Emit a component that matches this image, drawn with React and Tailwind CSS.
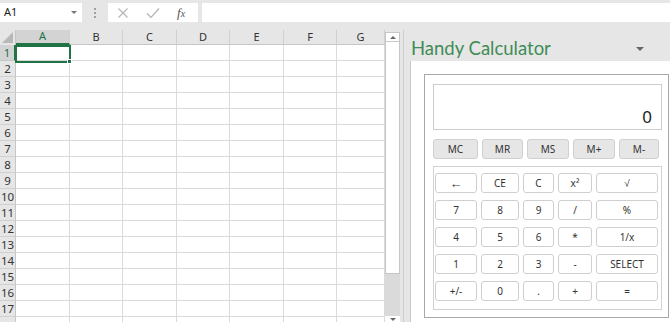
import React from "react";

const colWidths = [54, 53, 54, 53, 54, 53, 48];
const colNames = ["A", "B", "C", "D", "E", "F", "G"];
const rows = Array.from({ length: 18 }, (_, i) => i + 1);

function Btn({ w, children, mem }) {
  return (
    <div
      className={`h-[20px] flex items-center justify-center rounded-[3px] border text-[10px] text-[#333] ${
        mem ? "bg-[#e6e6e6] border-[#d0d0d0]" : "bg-white border-[#cfcfcf]"
      }`}
      style={{ width: w }}
    >
      {children}
    </div>
  );
}

const btnRows = [
  ["←", "CE", "C", "x²", "√"],
  ["7", "8", "9", "/", "%"],
  ["4", "5", "6", "*", "1/x"],
  ["1", "2", "3", "-", "SELECT"],
  ["+/-", "0", ".", "+", "="],
];
const btnW = [42, 38, 31, 34, 62];

export default function App() {
  return (
    <div className="w-[670px] h-[322px] overflow-hidden bg-[#e6e6e6] flex flex-col font-['Noto_Sans',sans-serif]">
      {/* formula bar */}
      <div className="h-[30px] flex items-start pt-[3px] shrink-0">
        <div className="w-[82px] h-[19px] bg-white flex items-center justify-between pl-[4px] pr-[5px]">
          <span className="text-[11px] text-[#222]">A1</span>
          <span className="w-0 h-0 border-l-[3px] border-r-[3px] border-t-[3px] border-l-transparent border-r-transparent border-t-[#777]" />
        </div>
        <div className="w-[26px] h-[19px] flex flex-col items-center justify-center gap-[2px]">
          <span className="w-[2px] h-[2px] bg-[#a0a0a0]" />
          <span className="w-[2px] h-[2px] bg-[#a0a0a0]" />
          <span className="w-[2px] h-[2px] bg-[#a0a0a0]" />
        </div>
        <div className="w-[90px] h-[19px] bg-white flex items-center">
          <svg width="12" height="12" viewBox="0 0 12 12" className="ml-[9px]">
            <path d="M1.5 1.5 L10.5 10.5 M10.5 1.5 L1.5 10.5" stroke="#b3b3b3" strokeWidth="1.1" fill="none" />
          </svg>
          <svg width="14" height="12" viewBox="0 0 14 12" className="ml-[17px]">
            <path d="M1 6.5 L5 10.5 L13 1.5" stroke="#b3b3b3" strokeWidth="1.2" fill="none" />
          </svg>
          <span className="ml-[17px] text-[13px] italic text-[#555] font-['Liberation_Serif',serif] leading-none">
            f<span className="text-[10px]">x</span>
          </span>
        </div>
        <div className="ml-[4px] flex-1 h-[19px] bg-white" />
      </div>

      <div className="flex flex-1 min-h-0">
        {/* grid */}
        <div className="w-[385px] flex flex-col bg-white shrink-0">
          <div className="flex h-[15px] bg-[#e6e6e6] shrink-0">
            <div className="w-[16px] h-full relative border-r border-[#c6c6c6]">
              <svg width="11" height="11" viewBox="0 0 11 11" className="absolute right-[2px] bottom-[2px]">
                <path d="M11 0 L11 11 L0 11 Z" fill="#b8b8b8" />
              </svg>
            </div>
            {colNames.map((c, i) => (
              <div
                key={c}
                className={`h-full flex items-center justify-center text-[11px] border-r border-[#d0d0d0] ${
                  i === 0 ? "bg-[#d3d3d3] text-[#217346] border-b-2 border-b-[#217346]" : "text-[#333] border-b border-b-[#c6c6c6]"
                }`}
                style={{ width: colWidths[i] }}
              >
                {c}
              </div>
            ))}
          </div>
          <div className="relative flex-1 min-h-0 overflow-hidden">
            {rows.map((r) => (
              <div key={r} className="flex h-[16px]">
                <div
                  className={`w-[16px] h-full flex items-center justify-center text-[11.5px] border-r border-b ${
                    r === 1 ? "bg-[#d3d3d3] text-[#217346] border-r-[#217346] border-r-2 border-b-[#c6c6c6]" : "bg-[#e6e6e6] text-[#333] border-r-[#c6c6c6] border-b-[#d0d0d0]"
                  }`}
                >
                  {r < 18 ? r : ""}
                </div>
                {colWidths.map((w, i) => (
                  <div key={i} className="h-full border-r border-b border-[#dadada]" style={{ width: w }} />
                ))}
              </div>
            ))}
            <div className="absolute left-[15px] top-0 w-[56px] h-[18px] border-2 border-[#217346]" />
            <div className="absolute left-[67px] top-[14px] w-[5px] h-[5px] bg-[#217346] border border-white" />
          </div>
        </div>

        {/* scrollbar */}
        <div className="w-[15px] flex flex-col pt-[2px] shrink-0">
          <div className="h-[10px] bg-white border border-[#c6c6c6] flex items-center justify-center">
            <span className="w-0 h-0 border-l-[3px] border-r-[3px] border-b-[3px] border-l-transparent border-r-transparent border-b-[#666]" />
          </div>
          <div className="h-[232px] bg-white border-x border-b border-[#c6c6c6]" />
          <div className="flex-1 bg-[#dadada]" />
          <div className="h-[6px] bg-white flex items-center justify-center">
            <span className="w-0 h-0 border-l-[3px] border-r-[3px] border-t-[3px] border-l-transparent border-r-transparent border-t-[#666]" />
          </div>
        </div>

        {/* task pane */}
        <div className="flex-1 flex flex-col pl-[3px]">
          <div className="flex-1 flex flex-col border-l border-[#cfcfcf] pl-[6px]">
            <div className="h-[31px] flex items-end justify-between pr-[26px] pb-[1px] shrink-0">
              <span className="text-[18.5px] leading-[24px] text-[#3f8c57] pl-[1px] font-['Lato',sans-serif]">Handy Calculator</span>
              <span className="mb-[9px] w-0 h-0 border-l-[4px] border-r-[4px] border-t-[4px] border-l-transparent border-r-transparent border-t-[#666]" />
            </div>
            <div className="flex-1 bg-white border-l border-[#c8c8c8] pl-[13px] pt-[13px] pb-[4px] pr-[1px]">
              <div className="h-full border border-[#a8a8a8] pl-[8px] pr-[6px] pt-[9px] flex flex-col">
                <div className="h-[46px] border border-[#cdcdcd] flex items-end justify-end pr-[9px] pb-[4px] shrink-0">
                  <span className="text-[17px] leading-none text-[#222]">0</span>
                </div>
                <div className="flex mt-[9px] gap-[4px]">
                  <Btn w={45} mem>MC</Btn>
                  <Btn w={41} mem>MR</Btn>
                  <Btn w={42} mem>MS</Btn>
                  <Btn w={42} mem>M+</Btn>
                  <Btn w={40} mem>M-</Btn>
                </div>
                <div className="mt-[7px] w-[229px] h-[144px] border border-[#d2d2d2] pl-[1px] pt-[6px] flex flex-col gap-[7px]">
                  {btnRows.map((row, ri) => (
                    <div key={ri} className="flex gap-[4px]">
                      {row.map((t, ci) => (
                        <Btn key={ci} w={btnW[ci]}>
                          {t === "←" ? <span className="text-[13px] leading-none">←</span> : t}
                        </Btn>
                      ))}
                    </div>
                  ))}
                </div>
              </div>
            </div>
          </div>
        </div>
      </div>
    </div>
  );
}
